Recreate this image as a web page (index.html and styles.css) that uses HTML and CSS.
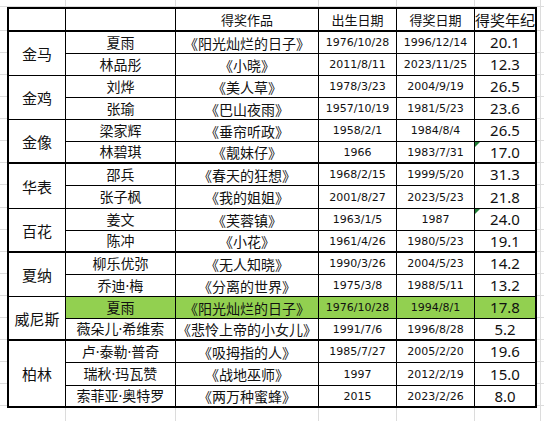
FILE: index.html
```html
<!DOCTYPE html>
<html lang="zh">
<head>
<meta charset="utf-8">
<link rel="stylesheet" href="styles.css">
</head>
<body>
<table class="sheet">
  <colgroup>
    <col class="c1"><col class="c2"><col class="c3"><col class="c4"><col class="c5"><col class="c6">
  </colgroup>
  <tr class="head thick">
    <td></td><td></td><td class="h">得奖作品</td><td class="h">出生日期</td><td class="h">得奖日期</td><td class="h big">得奖年纪</td>
  </tr>
  <tr><td class="grp" rowspan="2">金马</td><td class="nm">夏雨</td><td class="tt">《阳光灿烂的日子》</td><td class="dt">1976/10/28</td><td class="dt">1996/12/14</td><td class="ag">20.1</td></tr>
  <tr><td class="nm">林品彤</td><td class="tt">《小晓》</td><td class="dt">2011/8/11</td><td class="dt">2023/11/25</td><td class="ag">12.3</td></tr>
  <tr><td class="grp" rowspan="2">金鸡</td><td class="nm">刘烨</td><td class="tt">《美人草》</td><td class="dt">1978/3/23</td><td class="dt">2004/9/19</td><td class="ag">26.5</td></tr>
  <tr><td class="nm">张瑜</td><td class="tt">《巴山夜雨》</td><td class="dt">1957/10/19</td><td class="dt">1981/5/23</td><td class="ag">23.6</td></tr>
  <tr><td class="grp thickb" rowspan="2">金像</td><td class="nm">梁家辉</td><td class="tt">《垂帘听政》</td><td class="dt">1958/2/1</td><td class="dt">1984/8/4</td><td class="ag">26.5</td></tr>
  <tr class="thick"><td class="nm">林碧琪</td><td class="tt">《靓妹仔》</td><td class="dt">1966</td><td class="dt">1983/7/31</td><td class="ag flag">17.0</td></tr>
  <tr><td class="grp" rowspan="2">华表</td><td class="nm">邵兵</td><td class="tt">《春天的狂想》</td><td class="dt">1968/2/15</td><td class="dt">1999/5/20</td><td class="ag">31.3</td></tr>
  <tr class="tall"><td class="nm">张子枫</td><td class="tt">《我的姐姐》</td><td class="dt">2001/8/27</td><td class="dt">2023/5/23</td><td class="ag">21.8</td></tr>
  <tr><td class="grp thickb" rowspan="2">百花</td><td class="nm">姜文</td><td class="tt">《芙蓉镇》</td><td class="dt">1963/1/5</td><td class="dt">1987</td><td class="ag flag">24.0</td></tr>
  <tr class="thick"><td class="nm">陈冲</td><td class="tt">《小花》</td><td class="dt">1961/4/26</td><td class="dt">1980/5/23</td><td class="ag">19.1</td></tr>
  <tr><td class="grp" rowspan="2">夏纳</td><td class="nm">柳乐优弥</td><td class="tt">《无人知晓》</td><td class="dt">1990/3/26</td><td class="dt">2004/5/23</td><td class="ag">14.2</td></tr>
  <tr><td class="nm">乔迪·梅</td><td class="tt">《分离的世界》</td><td class="dt">1975/3/8</td><td class="dt">1988/5/11</td><td class="ag">13.2</td></tr>
  <tr class="hl"><td class="grp thickb" rowspan="2">威尼斯</td><td class="nm">夏雨</td><td class="tt">《阳光灿烂的日子》</td><td class="dt">1976/10/28</td><td class="dt">1994/8/1</td><td class="ag">17.8</td></tr>
  <tr class="thick"><td class="nm">薇朵儿·希维索</td><td class="tt">《悲怜上帝的小女儿》</td><td class="dt">1991/7/6</td><td class="dt">1996/8/28</td><td class="ag">5.2</td></tr>
  <tr><td class="grp thickb" rowspan="3">柏林</td><td class="nm">卢·泰勒·普奇</td><td class="tt">《吸拇指的人》</td><td class="dt">1985/7/27</td><td class="dt">2005/2/20</td><td class="ag">19.6</td></tr>
  <tr class="tall"><td class="nm">瑞秋·玛瓦赞</td><td class="tt">《战地巫师》</td><td class="dt">1997</td><td class="dt">2012/2/19</td><td class="ag">15.0</td></tr>
  <tr class="thick"><td class="nm">索菲亚·奥特罗</td><td class="tt">《两万种蜜蜂》</td><td class="dt">2015</td><td class="dt">2023/2/26</td><td class="ag">8.0</td></tr>
</table>
</body>
</html>
```
FILE: styles.css
```css
html, body {
  margin: 0;
  padding: 0;
}
body {
  width: 544px;
  height: 421px;
  overflow: hidden;
  background-color: #fff;
  background-image:
    linear-gradient(to right, transparent 65px, #dcdcdc 65px, #dcdcdc 66px, transparent 66px),
    linear-gradient(to right, transparent 175px, #dcdcdc 175px, #dcdcdc 176px, transparent 176px),
    linear-gradient(to right, transparent 318px, #dcdcdc 318px, #dcdcdc 319px, transparent 319px),
    linear-gradient(to right, transparent 396px, #dcdcdc 396px, #dcdcdc 397px, transparent 397px),
    linear-gradient(to right, transparent 474px, #dcdcdc 474px, #dcdcdc 475px, transparent 475px),
    linear-gradient(to right, transparent 540px, #dcdcdc 540px, #dcdcdc 541px, transparent 541px),
    repeating-linear-gradient(to bottom, transparent 0, transparent 21.06px, #dcdcdc 21.06px, #dcdcdc 22.06px);
  background-position: 0 0, 0 0, 0 0, 0 0, 0 0, 0 0, 0 9px;
  background-repeat: no-repeat, no-repeat, no-repeat, no-repeat, no-repeat, no-repeat, repeat;
  font-family: "Noto Sans CJK SC", "Noto Sans", sans-serif;
  color: #111;
}
.sheet {
  margin: 7px 0 0 7px;
  border-collapse: separate;
  border-spacing: 0;
  table-layout: fixed;
  width: 530px;
  border-top: 2px solid #000;
  border-left: 2px solid #000;
  background: #fff;
}
.c1 { width: 57px; }
.c2 { width: 110px; }
.c3 { width: 143px; }
.c4 { width: 78px; }
.c5 { width: 78px; }
.c6 { width: 62px; }
.sheet td {
  padding: 0;
  border-right: 1px solid #000;
  border-bottom: 1px solid #000;
  text-align: center;
  vertical-align: middle;
  white-space: nowrap;
  overflow: hidden;
  line-height: 1;
  position: relative;
}
.sheet td:last-child { border-right: 2px solid #000; }
.sheet tr { height: 22px; }
.sheet tr.tall { height: 23px; }
.sheet tr.head { height: 23px; }
.sheet tr.thick td, .sheet td.thickb { border-bottom: 2px solid #000; }
.h { font-size: 13px; }
.h.big { font-size: 15px; }
.grp { font-size: 15px; }
.nm {
  font-family: "Noto Sans", "Noto Sans CJK SC", sans-serif;
  font-size: 14px;
}
.tt { font-size: 14px; }
.dt {
  font-family: "DejaVu Sans", sans-serif;
  font-size: 11px;
}
.ag {
  font-family: "Noto Sans", sans-serif;
  font-size: 15px;
}
.hl td:not(.grp) { background: #92d050; }
.flag::before {
  content: "";
  position: absolute;
  left: 0;
  top: 0;
  width: 0;
  height: 0;
  border-top: 5px solid #1e7b34;
  border-right: 5px solid transparent;
}
```
